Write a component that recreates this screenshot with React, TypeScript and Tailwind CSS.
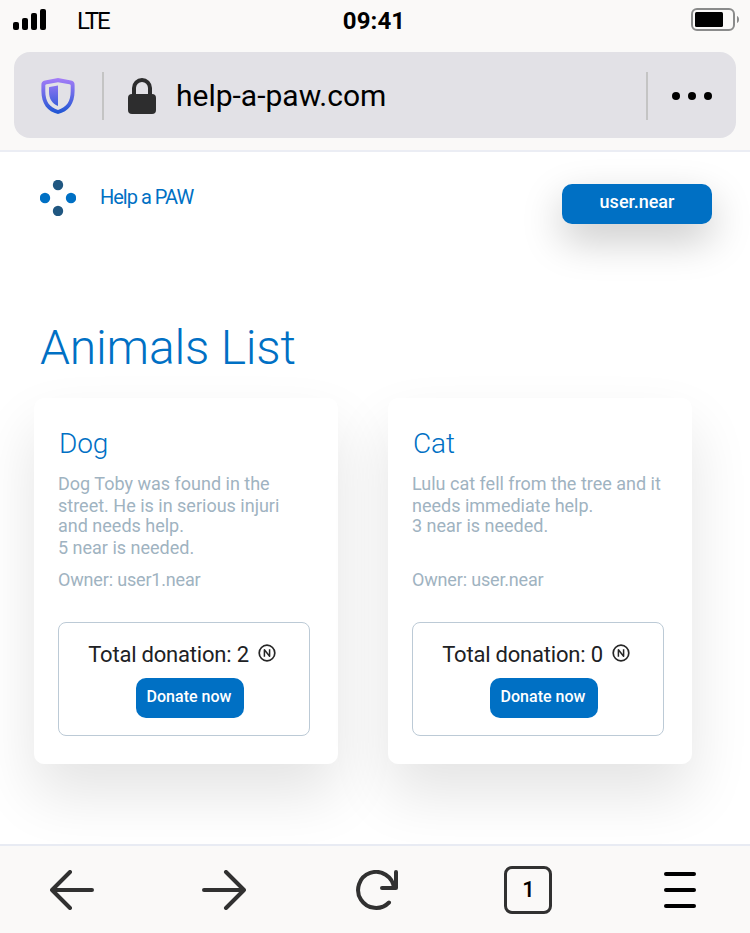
import React from "react";

type Animal = { name: string; lines: string[]; owner: string; total: number };

const animals: Animal[] = [
  {
    name: "Dog",
    lines: ["Dog Toby was found in the", "street. He is in serious injuri", "and needs help.", "5 near is needed."],
    owner: "user1.near",
    total: 2,
  },
  {
    name: "Cat",
    lines: ["Lulu cat fell from the tree and it", "needs immediate help.", "3 near is needed."],
    owner: "user.near",
    total: 0,
  },
];

function StatusBar() {
  return (
    <div className="flex h-[52px] items-start justify-between pl-[13px] pr-[11px]">
      <div className="flex w-[320px] items-start">
        <svg className="mt-[9px]" width="33" height="21" viewBox="0 0 33 21">
          <rect x="0" y="13" width="6" height="8" rx="2" />
          <rect x="9" y="9" width="6" height="12" rx="2" />
          <rect x="18" y="4" width="6" height="17" rx="2" />
          <rect x="27" y="0" width="6" height="21" rx="2" />
        </svg>
        <span className="ml-[31px] mt-[7px] text-[24px] leading-[28px] tracking-[-2px]">LTE</span>
      </div>
      <span className="mr-1 mt-[7px] text-[24px] font-bold leading-[28px] tracking-[0.1px]">09:41</span>
      <div className="flex w-[320px] justify-end">
        <svg className="mt-[8px]" width="48" height="23" viewBox="0 0 48 23">
          <rect x="1" y="1" width="42" height="21" rx="5" fill="none" stroke="#8a8b8b" strokeWidth="2" />
          <rect x="4" y="4" width="28" height="15" rx="1.5" />
          <path d="M46 8c1.3.3 2 1.6 2 3.500s-.7 3.200-2 3.500z" fill="#8a8b8b" />
        </svg>
      </div>
    </div>
  );
}

function AddressBar() {
  return (
    <div className="mx-[14px] flex h-[86px] items-center rounded-[16px] bg-[#e2e1e6] pt-[2px]">
      <svg className="ml-[27px]" width="34" height="36" viewBox="0 0 34 36">
        <defs>
          <linearGradient id="shield" x1="0" y1="0" x2="0" y2="1">
            <stop offset="0" stopColor="#a67df8" />
            <stop offset="1" stopColor="#1d55d3" />
          </linearGradient>
        </defs>
        <path
          fill="url(#shield)"
          fillRule="evenodd"
          d="M17 0 4 2.500C1.500 3 .3 4.500.4 7v6C.5 26 6.500 33.500 17 36c10.500-2.500 16.500-10 16.600-23V7c.1-2.500-1.100-4-3.600-4.500zM17 4.200l11.500 2.100c.9.1 1.200.6 1.200 1.400V13c0 10.500-4.200 16.300-12.700 19C8.500 29.300 4.300 23.500 4.300 13V7.700c0-.8.3-1.300 1.200-1.400zM17 7.600V28c-6-2.600-9-7-9-14.500V9.800c0-.4.200-.6.600-.7z"
        />
      </svg>
      <div className="ml-[27px] h-12 w-[2px] bg-[#c4c4c4]" />
      <svg className="ml-6" width="28" height="36" viewBox="0 0 28 36">
        <path d="M6 18v-8a8 8 0 0 1 16 0v8" fill="none" stroke="#2d2d2e" strokeWidth="4" />
        <rect y="16" width="28" height="20" rx="4" fill="#2d2d2e" />
      </svg>
      <span className="ml-5 text-[30px] leading-9">help-a-paw.com</span>
      <div className="ml-auto h-12 w-[2px] bg-[#c4c4c4]" />
      <div className="ml-6 mr-6 flex gap-2">
        <i className="size-2 rounded-full bg-black" />
        <i className="size-2 rounded-full bg-black" />
        <i className="size-2 rounded-full bg-black" />
      </div>
    </div>
  );
}

function NearIcon() {
  return (
    <svg className="ml-[9px] mt-[2px]" width="18" height="18" viewBox="0 0 18 18" fill="none">
      <circle cx="9" cy="9" r="7.800" stroke="#262626" strokeWidth="1.700" />
      <path d="M6.400 12.800V5.700l5.200 6.600V5.200" stroke="#262626" strokeWidth="1.500" strokeLinejoin="round" />
    </svg>
  );
}

function AnimalCard({ animal }: { animal: Animal }) {
  return (
    <article className="h-[366px] w-[304px] rounded-[10px] bg-white px-6 pt-[30px] shadow-[0_30px_60px_rgba(0,0,0,0.11)]">
      <h2 className="ml-[1px] text-[28px] font-light leading-8 tracking-[-0.1px] text-[#0070c4]">{animal.name}</h2>
      <div className="mt-[13px] h-[96px] whitespace-nowrap text-[18px] leading-[21.200px] text-[#9fb3c1] [&>p:nth-child(2)]:-mb-px [&>p:nth-child(2)]:pt-px">
        {animal.lines.map((line) => (
          <p key={line}>{line}</p>
        ))}
      </div>
      <p className="text-[18px] leading-[22px] tracking-[-0.17px] text-[#9fb3c1]">Owner: {animal.owner}</p>
      <div className="mt-[31px] flex h-[114px] w-[252px] flex-col items-center rounded-[8px] border border-[#bccad6] pl-3 pt-[19px]">
        <div className="mr-[16px] flex text-[22px] leading-[26px] tracking-[-0.2px] text-[#202124]">
          Total donation: {animal.total}
          <NearIcon />
        </div>
        <button className="mt-[10px] h-10 w-[108px] rounded-[10px] bg-[#0070c4] pb-[3px] pr-[2px] text-[16px] font-medium leading-5 text-white">
          Donate now
        </button>
      </div>
    </article>
  );
}

function BottomBar() {
  return (
    <nav className="flex h-[89px] items-center border-t-2 border-[#e8ebf3] bg-[#faf9f8] pl-[50px]">
      <svg width="44" height="40" viewBox="0 0 44 40" fill="none" stroke="#313131" strokeWidth="4" strokeLinecap="round" strokeLinejoin="round">
        <path d="M42 20H2M20 2 2 20l18 18" />
      </svg>
      <svg className="ml-[108px]" width="44" height="40" viewBox="0 0 44 40" fill="none" stroke="#313131" strokeWidth="4" strokeLinecap="round" strokeLinejoin="round">
        <path d="M2 20h40M24 2l18 18-18 18" />
      </svg>
      <svg className="ml-[110px]" width="42" height="40" viewBox="0 0 42 40" fill="none" stroke="#313131" strokeWidth="4" strokeLinecap="round" strokeLinejoin="round">
        <path d="M40 2v16H26M38 18A18 18 0 1 0 33 32.500" />
      </svg>
      <div className="ml-[106px] flex size-12 items-center justify-center rounded-[8px] border-3 border-[#313131] pl-px pt-px text-[22px] font-medium leading-6">1</div>
      <div className="ml-[112px] flex flex-col gap-3">
        <i className="h-1 w-8 rounded-full bg-black" />
        <i className="h-1 w-8 rounded-full bg-black" />
        <i className="h-1 w-8 rounded-full bg-black" />
      </div>
    </nav>
  );
}

export default function App() {
  return (
    <div className="flex h-[933px] w-[750px] flex-col overflow-hidden bg-white font-['Roboto',sans-serif] text-black">
      <header className="h-[152px] shrink-0 border-b-2 border-[#ebedf4] bg-[#faf9f8]">
        <StatusBar />
        <AddressBar />
      </header>
      <main className="h-[692px] shrink-0 overflow-hidden">
        <div className="flex items-start pl-10 pr-[38px] pt-7">
          <svg width="36" height="36" viewBox="0 0 36 36">
            <circle cx="18" cy="5" r="5.200" fill="#205781" />
            <circle cx="18" cy="31" r="5.200" fill="#205781" />
            <circle cx="5" cy="18" r="5.200" fill="#0070c4" />
            <circle cx="31" cy="18" r="5.200" fill="#0070c4" />
          </svg>
          <span className="ml-6 mt-[5px] text-[20px] leading-6 tracking-[-1px] text-[#0070c4]">Help a PAW</span>
          <button className="ml-auto mt-1 h-10 w-[150px] rounded-[10px] bg-[#0070c4] pb-1 text-[18px] font-medium leading-6 text-white shadow-[0_16px_40px_rgba(0,0,0,0.22)]">
            user.near
          </button>
        </div>
        <h1 className="ml-10 mt-24 text-[48px] font-light leading-[56px] tracking-[-0.2px] text-[#0070c4]">Animals List</h1>
        <section className="ml-[34px] mt-[22px] flex gap-[50px]">
          {animals.map((animal) => (
            <AnimalCard key={animal.name} animal={animal} />
          ))}
        </section>
      </main>
      <BottomBar />
    </div>
  );
}
